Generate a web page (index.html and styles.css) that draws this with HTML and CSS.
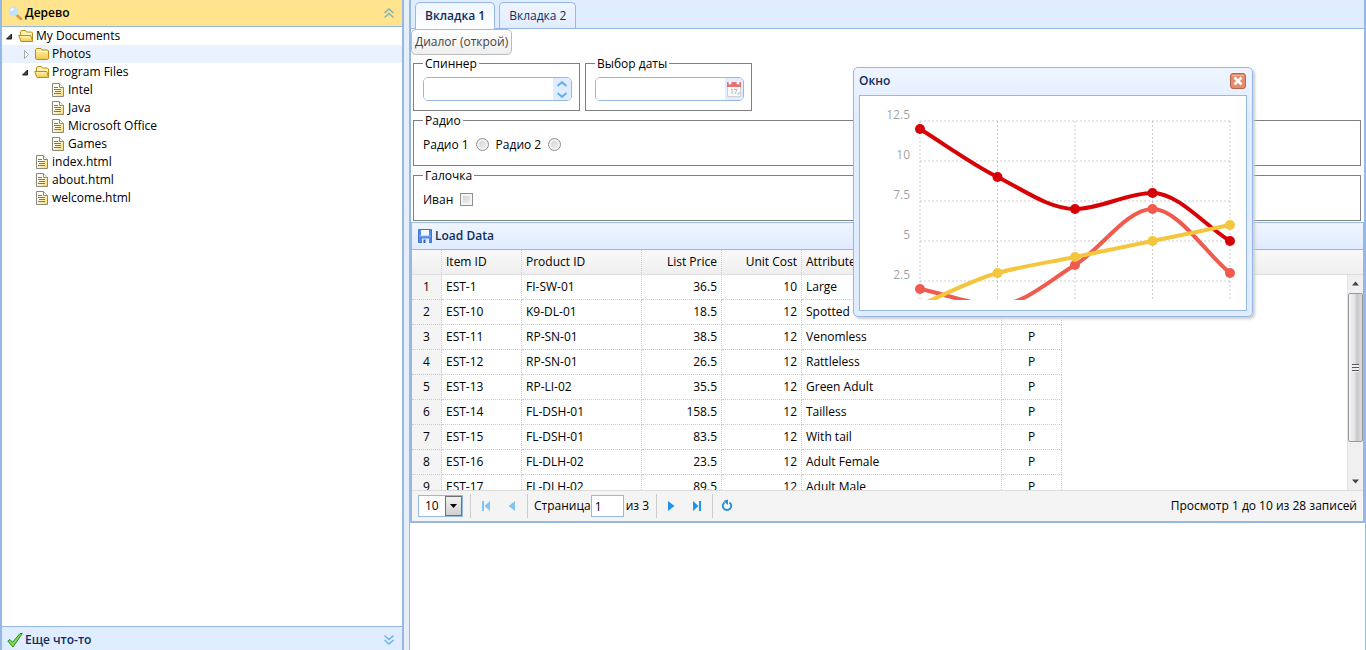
FILE: index.html
```html
<!DOCTYPE html>
<html lang="ru">

<head>
    <meta charset="UTF-8">
    <meta name="viewport" content="width=device-width, initial-scale=1.0">
    <title>Дерево</title>
    <link rel="stylesheet" href="styles.css">
</head>

<body>
    <!-- icons used more than once -->
    <svg class="defs" width="0" height="0">
        <defs>
            <linearGradient id="gold" x1="0" y1="0" x2="0" y2="1">
                <stop offset="0" stop-color="#fff6b8" />
                <stop offset="1" stop-color="#f2c84a" />
            </linearGradient>
            <linearGradient id="paper" x1="0" y1="0" x2="1" y2="1">
                <stop offset="0.4" stop-color="#fffef0" />
                <stop offset="1" stop-color="#f6d860" />
            </linearGradient>
        </defs>
        <symbol id="i-open" viewBox="0 0 16 18">
            <path d="M2.500 8.500V5l1-1.500h4l1 1.500h5l1 1v8" fill="#fff3b0" stroke="#b98d1b" />
            <path d="M.7 8.500h12l2 6H3z" fill="url(#gold)" stroke="#b98d1b" stroke-linejoin="round" />
        </symbol>
        <symbol id="i-folder" viewBox="0 0 16 18">
            <path d="M1.500 5l1-1.500h4.500l1 1.500h5.500l1 1v7.500l-1 1h-11l-1-1z" fill="url(#gold)" stroke="#b98d1b" />
            <path d="M2.500 6.500h11" stroke="#fffbdc" />
        </symbol>
        <symbol id="i-file" viewBox="0 0 16 18">
            <path d="M2.500 2.500h7l4 4v9h-11z" fill="url(#paper)" stroke="#8a8a7c" />
            <path d="M9.500 2.500v4h4" fill="#fff" stroke="#8a8a7c" />
            <path d="M4 6.500h4M4 8.500h7M5 10.500h6M4 12.500h7" stroke="#77776c" />
        </symbol>
        <symbol id="i-down" viewBox="0 0 12 18">
            <path d="M9.500 7v5h-5z" fill="#444" stroke="#222" />
        </symbol>
        <symbol id="i-right" viewBox="0 0 12 18">
            <path d="M6.500 5.500v8l4-4z" fill="#fff" stroke="#aaa" />
        </symbol>
    </svg>

    <div class="west">
        <div class="acc-header active">
            <svg class="icon" width="16" height="16" viewBox="0 0 16 16">
                <path d="M9.500 10l4.500 4" stroke="#d99a48" stroke-width="2.600" stroke-linecap="round" />
                <circle cx="6.500" cy="6.500" r="4.900" fill="#c4e3fa" stroke="#8fb4dc" stroke-width="1.500" />
                <path d="M3.800 6a3 3 0 0 1 3-2.300" fill="none" stroke="#fff" stroke-width="1.500" />
            </svg>
            <span>Дерево</span>
            <button class="collapse" aria-label="Свернуть">
                <svg width="12" height="12" viewBox="0 0 12 12"><path d="M1.500 6L6 2l4.500 4M1.500 10.500l4.500-4 4.500 4" fill="none" stroke="#7fb2b4" stroke-width="1.500" /></svg>
            </button>
        </div>
        <div class="acc-body">
            <ul class="tree">
                <li>
                    <div class="node"><svg class="hit"><use href="#i-down" /></svg><svg class="pic"><use href="#i-open" /></svg>My Documents</div>
                    <ul>
                        <li>
                            <div class="node hover"><svg class="hit"><use href="#i-right" /></svg><svg class="pic"><use href="#i-folder" /></svg>Photos</div>
                        </li>
                        <li>
                            <div class="node"><svg class="hit"><use href="#i-down" /></svg><svg class="pic"><use href="#i-open" /></svg>Program Files</div>
                            <ul>
                                <li><div class="node leaf"><svg class="pic"><use href="#i-file" /></svg>Intel</div></li>
                                <li><div class="node leaf"><svg class="pic"><use href="#i-file" /></svg>Java</div></li>
                                <li><div class="node leaf"><svg class="pic"><use href="#i-file" /></svg>Microsoft Office</div></li>
                                <li><div class="node leaf"><svg class="pic"><use href="#i-file" /></svg>Games</div></li>
                            </ul>
                        </li>
                        <li><div class="node leaf"><svg class="pic"><use href="#i-file" /></svg>index.html</div></li>
                        <li><div class="node leaf"><svg class="pic"><use href="#i-file" /></svg>about.html</div></li>
                        <li><div class="node leaf"><svg class="pic"><use href="#i-file" /></svg>welcome.html</div></li>
                    </ul>
                </li>
            </ul>
        </div>
        <div class="acc-header bottom">
            <svg class="icon" width="16" height="16" viewBox="0 0 16 16">
                <path d="M.8 9l2.200-1.500 2.500 2.800L13 1.500h2.300L6 15z" fill="#7fdc4c" stroke="#2f8a2a" stroke-linejoin="round" />
            </svg>
            <span>Еще что-то</span>
            <button class="collapse" aria-label="Развернуть">
                <svg width="12" height="12" viewBox="0 0 12 12"><path d="M1.500 1.500L6 5.500l4.500-4M1.500 6L6 10l4.500-4" fill="none" stroke="#6ab5ee" stroke-width="1.500" /></svg>
            </button>
        </div>
    </div>

    <div class="center">
        <div class="panel">
            <div class="tabs">
                <a href="#" class="tab selected">Вкладка 1</a>
                <a href="#" class="tab">Вкладка 2</a>
            </div>

            <button class="btn">Диалог (открой)</button>

            <div class="fields">
                <fieldset>
                    <legend>Спиннер</legend>
                    <div class="box">
                        <input type="text" aria-label="Спиннер">
                        <span class="addon spin">
                            <button aria-label="Больше"><svg width="12" height="6" viewBox="0 0 12 6"><path d="M1.500 5L6 1.200 10.500 5" fill="none" stroke="#62b0ee" stroke-width="2" /></svg></button>
                            <button aria-label="Меньше"><svg width="12" height="6" viewBox="0 0 12 6"><path d="M1.500 1L6 4.800 10.500 1" fill="none" stroke="#62b0ee" stroke-width="2" /></svg></button>
                        </span>
                    </div>
                </fieldset>
                <fieldset>
                    <legend>Выбор даты</legend>
                    <div class="box">
                        <input type="text" aria-label="Выбор даты">
                        <button class="addon" aria-label="Календарь">
                            <svg width="16" height="18" viewBox="0 0 16 18">
                                <path d="M1.500 6v10.500h13V6" fill="#fcfcfc" stroke="#d0d0d0" />
                                <path d="M1 2h14v5H1z" fill="#e87070" />
                                <circle cx="4" cy="3" r="1.500" fill="#fff" stroke="#c99" stroke-width=".6" />
                                <circle cx="12" cy="3" r="1.500" fill="#fff" stroke="#c99" stroke-width=".6" />
                                <path d="M5 9.500l1-.5v5M8 9.500h3l-2 4.500M11 14h2v-2" fill="none" stroke="#bbb" />
                            </svg>
                        </button>
                    </div>
                </fieldset>
            </div>

            <fieldset class="wide">
                <legend>Радио</legend>
                <div class="line">
                    <label for="r1">Радио 1</label><input type="radio" name="radio" id="r1">
                    <label for="r2">Радио 2</label><input type="radio" name="radio" id="r2">
                </div>
            </fieldset>
            <fieldset class="wide">
                <legend>Галочка</legend>
                <div class="line">
                    <label for="ivan">Иван</label><input type="checkbox" id="ivan">
                </div>
            </fieldset>

            <div class="grid">
                <div class="grid-title">
                    <svg width="16" height="16" viewBox="0 0 16 16">
                        <path d="M1.500 1.500h13v13h-13z" fill="#4f8ae8" stroke="#3f74cf" />
                        <path d="M4 2h8v6H4z" fill="#f4f9ff" />
                        <path d="M2 8h12" stroke="#8db8f5" />
                        <path d="M5 10.500h7V15H5z" fill="#e4ecf8" />
                        <path d="M6.500 11.500h2V15h-2z" fill="#2c5fb8" />
                    </svg>
                    <span>Load Data</span>
                </div>
                <div class="grid-head">
                    <table>
                        <tr>
                            <th class="num"></th>
                            <th class="c80">Item ID</th>
                            <th class="c120">Product ID</th>
                            <th class="c80 r">List Price</th>
                            <th class="c80 r">Unit Cost</th>
                            <th class="c200">Attribute</th>
                            <th class="c60 m">Status</th>
                        </tr>
                    </table>
                </div>
                <div class="grid-body">
                    <div class="rows">
                        <table>
                            <tr><td class="num">1</td><td class="c80">EST-1</td><td class="c120">FI-SW-01</td><td class="c80 r">36.5</td><td class="c80 r">10</td><td class="c200">Large</td><td class="c60 m">P</td></tr>
                            <tr><td class="num">2</td><td>EST-10</td><td>K9-DL-01</td><td class="r">18.5</td><td class="r">12</td><td>Spotted</td><td class="m">P</td></tr>
                            <tr><td class="num">3</td><td>EST-11</td><td>RP-SN-01</td><td class="r">38.5</td><td class="r">12</td><td>Venomless</td><td class="m">P</td></tr>
                            <tr><td class="num">4</td><td>EST-12</td><td>RP-SN-01</td><td class="r">26.5</td><td class="r">12</td><td>Rattleless</td><td class="m">P</td></tr>
                            <tr><td class="num">5</td><td>EST-13</td><td>RP-LI-02</td><td class="r">35.5</td><td class="r">12</td><td>Green Adult</td><td class="m">P</td></tr>
                            <tr><td class="num">6</td><td>EST-14</td><td>FL-DSH-01</td><td class="r">158.5</td><td class="r">12</td><td>Tailless</td><td class="m">P</td></tr>
                            <tr><td class="num">7</td><td>EST-15</td><td>FL-DSH-01</td><td class="r">83.5</td><td class="r">12</td><td>With tail</td><td class="m">P</td></tr>
                            <tr><td class="num">8</td><td>EST-16</td><td>FL-DLH-02</td><td class="r">23.5</td><td class="r">12</td><td>Adult Female</td><td class="m">P</td></tr>
                            <tr><td class="num">9</td><td>EST-17</td><td>FL-DLH-02</td><td class="r">89.5</td><td class="r">12</td><td>Adult Male</td><td class="m">P</td></tr>
                        </table>
                    </div>
                    <div class="scroll">
                        <svg width="15" height="18" viewBox="0 0 15 18"><path d="M4 10.500h7L7.500 6.500z" fill="#444" /></svg>
                        <div class="thumb"><i></i></div>
                        <svg width="15" height="18" viewBox="0 0 15 18"><path d="M4 7.500h7l-3.500 4z" fill="#444" /></svg>
                    </div>
                </div>
                <div class="pager">
                    <div class="size">
                        <select aria-label="Строк на странице">
                            <option>10</option>
                            <option>20</option>
                        </select>
                        <span class="arrow"><svg width="15" height="18" viewBox="0 0 15 18"><path d="M4 7h7l-3.500 4z" /></svg></span>
                    </div>
                    <span class="sep"></span>
                    <button disabled aria-label="Первая"><svg width="16" height="16" viewBox="0 0 16 16"><path d="M4 3h2v10H4zM12 3v10L6.500 8z" fill="#1b95ee" /></svg></button>
                    <button disabled aria-label="Назад"><svg width="16" height="16" viewBox="0 0 16 16"><path d="M11 3v10L4.500 8z" fill="#1b95ee" /></svg></button>
                    <span class="sep"></span>
                    <label for="page">Страница</label>
                    <input type="text" id="page" value="1">
                    <span class="of">из 3</span>
                    <span class="sep"></span>
                    <button aria-label="Вперед"><svg width="16" height="16" viewBox="0 0 16 16"><path d="M5 3v10l6.500-5z" fill="#1b95ee" /></svg></button>
                    <button aria-label="Последняя"><svg width="16" height="16" viewBox="0 0 16 16"><path d="M4 3v10l5.500-5zM10 3h2v10h-2z" fill="#1b95ee" /></svg></button>
                    <span class="sep"></span>
                    <button aria-label="Обновить"><svg width="16" height="16" viewBox="0 0 16 16"><path d="M10.500 4.500a4.200 4.200 0 1 1-5 0" fill="none" stroke="#1b8fdc" stroke-width="1.800" /><path d="M4.500 3L9 1.500V7z" fill="#1b8fdc" /></svg></button>
                    <span class="info">Просмотр 1 до 10 из 28 записей</span>
                </div>
            </div>
        </div>
    </div>

    <div class="window">
        <div class="window-header">
            <span>Окно</span>
            <button aria-label="Закрыть">
                <svg width="16" height="16" viewBox="0 0 16 16">
                    <rect x=".5" y=".5" width="15" height="15" rx="2.500" fill="#e58b6b" stroke="#b5674d" />
                    <path d="M2 2.500h12" stroke="#f3b296" />
                    <path d="M4.500 4.500l7 7M11.500 4.500l-7 7" stroke="#fff" stroke-width="2.600" />
                </svg>
            </button>
        </div>
        <div class="window-body">
            <svg class="chart" width="386" height="204" viewBox="0 0 386 204">
                <g class="lines">
                    <path d="M60 25V204M137.500 25V204M215 25V204M292.500 25V204M370 25V204" />
                    <path d="M60 25H370M60 65H370M60 105H370M60 145H370M60 185H370" />
                </g>
                <g class="labels">
                    <text x="50" y="23">12.5</text>
                    <text x="50" y="63">10</text>
                    <text x="50" y="103">7.5</text>
                    <text x="50" y="143">5</text>
                    <text x="50" y="183">2.5</text>
                </g>
                <g class="a">
                    <path d="M60 33C85.800 49 111.700 68.200 137.500 81S189.200 113 215 113S266.700 97 292.500 97S344.200 129 370 145" />
                    <circle cx="60" cy="33" r="5" /><circle cx="137.500" cy="81" r="5" /><circle cx="215" cy="113" r="5" /><circle cx="292.500" cy="97" r="5" /><circle cx="370" cy="145" r="5" />
                </g>
                <g class="b">
                    <path d="M60 193C85.800 198.300 111.700 209 137.500 209S189.200 184.600 215 169S266.700 113 292.500 113S344.200 155.700 370 177" />
                    <circle cx="60" cy="193" r="5" /><circle cx="215" cy="169" r="5" /><circle cx="292.500" cy="113" r="5" /><circle cx="370" cy="177" r="5" />
                </g>
                <g class="c">
                    <path d="M60 209C85.800 198.300 111.700 184.100 137.500 177S189.200 166.300 215 161L370 129" />
                    <circle cx="137.500" cy="177" r="5" /><circle cx="215" cy="161" r="5" /><circle cx="292.500" cy="145" r="5" /><circle cx="370" cy="129" r="5" />
                </g>
            </svg>
        </div>
    </div>
</body>

</html>
```
FILE: styles.css
```css
* {
    padding: 0;
    margin: 0;
    box-sizing: border-box;
    list-style: none;
}

body {
    display: flex;
    height: 100vh;
    overflow: hidden;
    background-color: #e6eef8;
    font: 12px/18px "Trebuchet MS", "Open Sans", sans-serif;
    color: #000;
}

button {
    border: 0;
    background: none;
    font: inherit;
}

svg {
    display: block;
    flex: none;
}

.defs {
    position: absolute;
}

/* left accordion */
.west {
    display: flex;
    flex-direction: column;
    flex: none;
    width: 404px;
    margin-right: 5px;
    border: 2px solid #95b8e7;
    border-width: 0 2px;
    background-color: #fff;
}

.acc-header {
    display: flex;
    align-items: center;
    height: 27px;
    padding: 0 7px 0 5px;
    border-bottom: 1px solid #95b8e7;
    background-color: #e0ecff;
    color: #0e2d5f;
    font-weight: 600;
}

.acc-header.active {
    background-color: #ffe48d;
    color: #000;
}

.acc-header.bottom {
    height: 24px;
    padding-top: 2px;
    border-top: 1px solid #95b8e7;
    border-bottom: 0;
}

.acc-header .icon {
    margin-right: 2px;
}

.collapse {
    margin-left: auto;
}

.acc-body {
    flex: 1;
}

/* tree */
.node {
    display: flex;
    height: 18px;
}

.tree ul .node {
    padding-left: 16px;
}

.tree ul ul .node {
    padding-left: 32px;
}

.tree ul .leaf {
    padding-left: 32px;
}

.tree ul ul .leaf {
    padding-left: 48px;
}

.node.hover {
    background-color: #eaf2ff;
}

.hit {
    width: 12px;
    height: 18px;
    margin-right: 4px;
}

.pic {
    width: 16px;
    height: 18px;
    margin-right: 2px;
}

/* right part */
.center {
    flex: 1;
    min-width: 0;
    border-left: 1px solid #95b8e7;
    border-right: 1px solid #95b8e7;
    background-color: #fff;
}

.panel {
    border: 1px solid #95b8e7;
    border-top: 0;
}

.tabs {
    display: flex;
    gap: 4px;
    height: 29px;
    padding: 2px 4px 0;
    border-bottom: 1px solid #95b8e7;
    background-color: #e0ecff;
}

.tab {
    height: 26px;
    padding: 0 9px;
    border: 1px solid #95b8e7;
    border-bottom: 0;
    border-radius: 5px 5px 0 0;
    background: linear-gradient(#eff5ff, #e0ecff);
    color: #0e2d5f;
    line-height: 26px;
    text-decoration: none;
}

.tab.selected {
    height: 27px;
    background: linear-gradient(#eff5ff, #fff);
    font-weight: 600;
}

.btn {
    display: block;
    height: 26px;
    padding: 0 3px;
    border: 1px solid #bbb;
    border-radius: 5px;
    background: linear-gradient(#fff, #eee);
    color: #444;
}

.fields {
    display: flex;
    gap: 5px;
    margin: 0 2px 1px;
}

fieldset {
    padding: 5px 8px 9px 9px;
    border: 1px solid #808080;
}

.fields fieldset {
    padding-right: 7px;
}

legend {
    padding: 0 2px;
    line-height: 17px;
}

.wide {
    margin: 0 3px 1px 2px;
}

.box {
    display: flex;
    width: 149px;
    height: 24px;
    border: 1px solid #95b8e7;
    border-radius: 5px;
    overflow: hidden;
}

.box input {
    flex: 1;
    min-width: 0;
    border: 0;
}

.addon {
    display: flex;
    align-items: center;
    justify-content: center;
    width: 18px;
    background-color: #e0ecff;
}

.spin {
    flex-direction: column;
    gap: 5px;
}

.line {
    display: flex;
    align-items: center;
    height: 22px;
}

.line input {
    width: 13px;
    height: 13px;
    margin: 0 7px 2px;
    border: 1px solid #8e8f8f;
    background: linear-gradient(135deg, #ccc, #f6f6f6);
    box-shadow: inset 0 0 0 2px #f4f4f4;
    appearance: none;
}

.line input[type=radio] {
    border-radius: 50%;
}

/* datagrid */
.grid {
    border: 1px solid #95b8e7;
}

.grid-title {
    display: flex;
    align-items: center;
    gap: 2px;
    height: 27px;
    padding-left: 5px;
    border-bottom: 1px solid #95b8e7;
    background: linear-gradient(#eff5ff, #e0ecff);
    color: #0e2d5f;
    font-weight: 600;
}

.grid-head {
    height: 25px;
    border-bottom: 1px solid #ddd;
    background: linear-gradient(#f9f9f9, #efefef);
    overflow: hidden;
}

table {
    table-layout: fixed;
    width: 650px;
    border-spacing: 0;
}

th,
td {
    height: 25px;
    padding: 0 4px;
    border: 1px dotted #ccc;
    border-width: 0 1px 1px 0;
    font-weight: normal;
    text-align: left;
    white-space: nowrap;
}

th.num,
td.num {
    width: 30px;
    text-align: center;
}

td.num {
    background-color: #f4f4f4;
}

.c60 {
    width: 60px;
}

.c80 {
    width: 80px;
}

.c120 {
    width: 120px;
}

.c200 {
    width: 200px;
}

th.r,
td.r {
    text-align: right;
}

th.m,
td.m {
    text-align: center;
}

.grid-body {
    display: flex;
    height: 215px;
    overflow: hidden;
}

.rows {
    flex: 1;
    min-width: 0;
}

.scroll {
    display: flex;
    flex-direction: column;
    width: 16px;
    border-left: 1px solid #e4e4e4;
    background-color: #f0f0f0;
}

.scroll svg:last-child {
    margin-top: auto;
}

.thumb {
    display: flex;
    align-items: center;
    justify-content: center;
    height: 149px;
    border: 1px solid #999;
    border-radius: 2px;
    background: linear-gradient(90deg, #f5f5f5, #e2e2e4 45%, #c6c7cb 60%, #dcdcdf);
}

.thumb i {
    width: 7px;
    height: 8px;
    background: repeating-linear-gradient(#555 0 1px, #eee 1px 3px);
}

.pager {
    display: flex;
    align-items: center;
    height: 31px;
    padding: 0 6px;
    border-top: 1px solid #ddd;
    background-color: #f4f4f4;
}

.size {
    position: relative;
}

.size select {
    display: block;
    width: 45px;
    height: 22px;
    padding-left: 6px;
    border: 1px solid #95b8e7;
    background-color: #fff;
    font: inherit;
    appearance: none;
}

/* drop-down button over the right edge of the select */
.arrow {
    position: absolute;
    top: 1px;
    right: 1px;
    width: 17px;
    height: 20px;
    border: 1px solid #707070;
    background: linear-gradient(#f2f2f2, #cfcfcf);
    pointer-events: none;
}

.sep {
    width: 1px;
    height: 24px;
    margin: 0 7px;
    background-color: #ccc;
}

.of + .sep,
button + .sep {
    margin-right: 6px;
}

.pager button {
    width: 16px;
    height: 16px;
}

.pager button + button {
    margin-left: 10px;
}

.pager button:disabled {
    opacity: .5;
}

.pager input {
    width: 33px;
    height: 22px;
    margin-right: 2px;
    padding: 0 3px;
    border: 1px solid #95b8e7;
    font: inherit;
}

.info {
    margin-left: auto;
}

/* floating window */
.window {
    position: absolute;
    top: 67px;
    left: 853px;
    padding: 5px;
    border: 1px solid #95b8e7;
    border-radius: 5px;
    background: linear-gradient(#eff5ff, #e0ecff 20%);
    box-shadow: 2px 2px 3px #ccc;
}

.window-header {
    display: flex;
    align-items: center;
    justify-content: space-between;
    height: 22px;
    padding: 0 1px 6px 0;
    color: #0e2d5f;
    font-weight: 600;
}

.window-body {
    padding-bottom: 10px;
    border: 1px solid #95b8e7;
    background-color: #fff;
}

.lines {
    fill: none;
    stroke: rgba(0, 0, 0, .2);
    stroke-dasharray: 2px;
}

.labels {
    fill: rgba(0, 0, 0, .4);
    text-anchor: end;
}

.a path,
.b path,
.c path {
    fill: none;
    stroke-width: 4px;
}

.a {
    fill: #d70206;
    stroke: #d70206;
}

.b {
    fill: #f05b4f;
    stroke: #f05b4f;
}

.c {
    fill: #f4c63d;
    stroke: #f4c63d;
}

circle {
    stroke-width: 0;
}
```
